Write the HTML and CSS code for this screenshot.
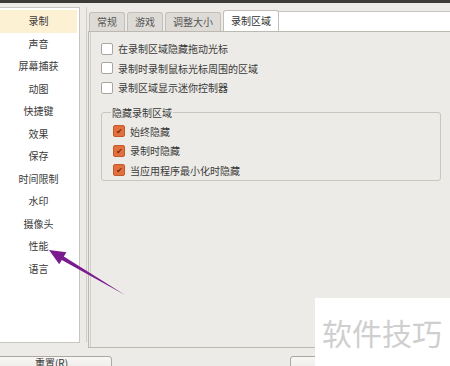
FILE: index.html
```html
<!DOCTYPE html>
<html lang="zh-CN">
<head>
    <meta charset="UTF-8">
    <title>设置</title>
    <link rel="stylesheet" href="styles.css">
</head>
<body>
    <div class="topbar"></div>

    <div class="main">
        <!-- Category list -->
        <ul class="sidebar">
            <li class="active">录制</li>
            <li>声音</li>
            <li>屏幕捕获</li>
            <li>动图</li>
            <li>快捷键</li>
            <li>效果</li>
            <li>保存</li>
            <li>时间限制</li>
            <li>水印</li>
            <li>摄像头</li>
            <li>性能</li>
            <li>语言</li>
        </ul>

        <div class="frame">
            <div class="tabs">
                <div class="tab">常规</div>
                <div class="tab">游戏</div>
                <div class="tab">调整大小</div>
                <div class="tab selected">录制区域</div>
                <div class="tab-fill"></div>
            </div>

            <div class="panel">
                <label class="check"><span class="box"></span>在录制区域隐藏拖动光标</label>
                <label class="check"><span class="box"></span>录制时录制鼠标光标周围的区域</label>
                <label class="check"><span class="box"></span>录制区域显示迷你控制器</label>

                <fieldset class="group">
                    <legend>隐藏录制区域</legend>
                    <label class="check"><span class="box on">&#10004;</span>始终隐藏</label>
                    <label class="check"><span class="box on">&#10004;</span>录制时隐藏</label>
                    <label class="check"><span class="box on">&#10004;</span>当应用程序最小化时隐藏</label>
                </fieldset>
            </div>
        </div>
    </div>

    <div class="footer">
        <button class="btn reset">重置(R)</button>
        <button class="btn ok">确定</button>
    </div>

    <!-- annotation overlay -->
    <svg class="arrow" width="450" height="366" viewBox="0 0 450 366">
        <polygon points="49,250 66.4,252.2 63.8,256.5 125,295 61.8,259.9 59.2,264.2" fill="#7a1b8e"/>
    </svg>

    <div class="watermark">软件技巧</div>
</body>
</html>
```

FILE: styles.css
```css
body {
    margin: 0;
    width: 450px;
    height: 366px;
    overflow: hidden;
    background: #edebe7;
    font-family: "Noto Sans CJK SC", "Noto Sans", sans-serif;
    font-size: 10px;
    color: #3a3a3a;
}
.topbar {
    height: 3px;
    background: #3c3b37;
}
.main {
    display: flex;
    padding-top: 4px;
}
.sidebar {
    list-style: none;
    margin: 0;
    padding: 2px 0 0 0;
    width: 79px;
    height: 332px;
    background: #fff;
    border: 1px solid #c9c5bf;
    border-left: none;
}
.sidebar li {
    height: 22.5px;
    line-height: 22.5px;
    text-align: center;
    margin-right: 2px;
}
.sidebar li.active {
    background: #fcf1d2;
}
.frame {
    flex: 1;
    margin-left: 6px;
    border-left: 1px solid #d2cec8;
    padding-left: 1px;
    height: 335px;
}
.tabs {
    display: flex;
    align-items: flex-end;
    height: 24px;
    padding-left: 1px;
}
.tab {
    height: 18px;
    line-height: 18px;
    padding: 0 7px;
    margin-right: 2px;
    background: #dedbd6;
    border: 1px solid #c2beb8;
    border-bottom: none;
    border-radius: 3px 3px 0 0;
    color: #555;
}
.tab.selected {
    height: 20px;
    line-height: 20px;
    background: #fff;
    color: #333;
    margin-right: 0;
}
.tab-fill {
    flex: 1;
    height: 19px;
    background: #fff;
    border-top: 1px solid #c9c5bf;
}
.panel {
    height: 308px;
    border: 1px solid #bcb8b2;
    border-right: none;
    box-shadow: inset 1px 0 0 #edebe7, inset 2px 0 0 #d4d0ca;
    padding: 7px 0 0 12px;
}
.check {
    display: flex;
    align-items: center;
    height: 19.5px;
}
.box {
    width: 10px;
    height: 10px;
    border: 1px solid #aaa59f;
    border-radius: 2px;
    background: #fff;
    margin-right: 5px;
    font-size: 8px;
    line-height: 10px;
    text-align: center;
    color: #7a2a10;
}
.box.on {
    background: #e2703f;
    border-color: #c45a2c;
}
.group {
    margin: 7px 9px 0 0;
    padding: 2px 0 5px 11px;
    border: 1px solid #c9c5bf;
    border-radius: 3px;
    height: 67px;
}
.group legend {
    padding: 0 1px;
    margin-left: -2px;
}
.footer {
    display: flex;
    padding-top: 13px;
}
.btn {
    height: 24px;
    font-family: inherit;
    font-size: 10px;
    line-height: 12px;
    color: #333;
    background: linear-gradient(#f8f7f5, #e6e3df);
    border: 1px solid #aba7a1;
    border-radius: 3px;
    padding: 0 0 11px 0;
}
.reset {
    width: 121px;
    margin-left: -9px;
}
.ok {
    width: 110px;
    margin-left: 178px;
}
.arrow {
    position: absolute;
    left: 0;
    top: 0;
}
.watermark {
    position: absolute;
    left: 315px;
    top: 298px;
    width: 135px;
    height: 68px;
    background: #fff;
    color: #cfcfcf;
    font-size: 30px;
    line-height: 68px;
    padding-left: 7px;
    box-sizing: border-box;
}
```
